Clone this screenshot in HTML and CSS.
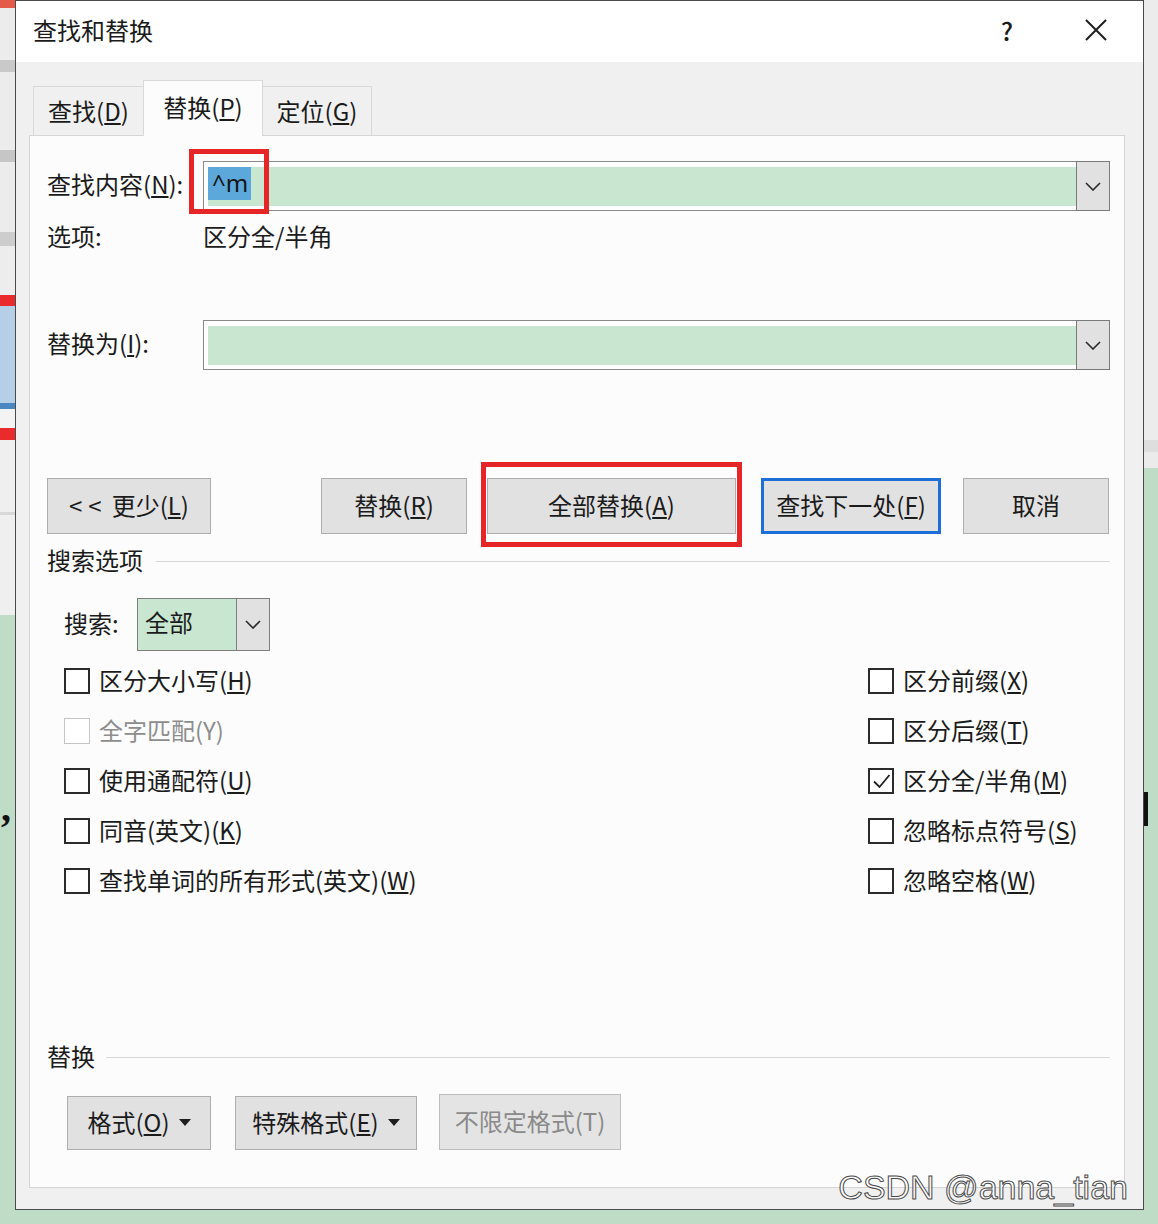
FILE: index.html
```html
<!DOCTYPE html>
<html lang="zh-CN">
<head>
<meta charset="utf-8">
<title>查找和替换</title>
<link rel="stylesheet" href="styles.css">
</head>
<body>
<div class="screen">
  <div class="strip strip-left"><span class="comma">,</span></div>

  <div class="dialog">
    <div class="titlebar">
      <span class="title">查找和替换</span>
      <span class="help">?</span>
      <span class="close">
        <svg width="22" height="22" viewBox="0 0 22 22"><path d="M1 1 L21 21 M21 1 L1 21" stroke="#1e1e1e" stroke-width="2" fill="none"/></svg>
      </span>
    </div>

    <div class="dialog-body">
      <div class="tabs">
        <div class="tab tab-find">查找(<u>D</u>)</div>
        <div class="tab tab-replace active">替换(<u>P</u>)</div>
        <div class="tab tab-goto">定位(<u>G</u>)</div>
      </div>

      <div class="panel">
        <div class="field-row">
          <span class="field-label">查找内容(<u>N</u>):</span>
          <div class="combo">
            <div class="combo-input"><div class="combo-fill"><span class="sel">^m</span></div></div>
            <div class="combo-btn"><svg width="16" height="9" viewBox="0 0 16 9"><path d="M1 1 L8 8 L15 1" stroke="#2a2a2a" stroke-width="1.6" fill="none"/></svg></div>
            <div class="annot annot-find"></div>
          </div>
        </div>

        <div class="opt-row">
          <span class="field-label">选项:</span>
          <span class="opt-value">区分全/半角</span>
        </div>

        <div class="field-row repl-row">
          <span class="field-label">替换为(<u>I</u>):</span>
          <div class="combo">
            <div class="combo-input"><div class="combo-fill"></div></div>
            <div class="combo-btn"><svg width="16" height="9" viewBox="0 0 16 9"><path d="M1 1 L8 8 L15 1" stroke="#2a2a2a" stroke-width="1.6" fill="none"/></svg></div>
          </div>
        </div>

        <div class="btn-row">
          <button class="btn btn-less"><span class="arrows">&lt;&lt;</span>更少(<u>L</u>)</button>
          <button class="btn btn-replace">替换(<u>R</u>)</button>
          <button class="btn btn-all">全部替换(<u>A</u>)<span class="annot annot-all"></span></button>
          <button class="btn btn-next">查找下一处(<u>F</u>)</button>
          <button class="btn btn-cancel">取消</button>
        </div>

        <div class="section-head">搜索选项</div>

        <div class="search-row">
          <span class="search-label">搜索:</span>
          <div class="select">
            <div class="select-value">全部</div>
            <div class="select-btn"><svg width="16" height="9" viewBox="0 0 16 9"><path d="M1 1 L8 8 L15 1" stroke="#2a2a2a" stroke-width="1.6" fill="none"/></svg></div>
          </div>
        </div>

        <div class="checks">
          <label class="check"><span class="box"></span>区分大小写(<u>H</u>)</label>
          <label class="check"><span class="box"></span>区分前缀(<u>X</u>)</label>
          <label class="check disabled"><span class="box"></span>全字匹配(Y)</label>
          <label class="check"><span class="box"></span>区分后缀(<u>T</u>)</label>
          <label class="check"><span class="box"></span>使用通配符(<u>U</u>)</label>
          <label class="check"><span class="box checked"><svg width="21" height="21" viewBox="0 0 21 21"><path d="M3 10.5 L8.5 16 L18.5 4" stroke="#1e1e1e" stroke-width="1.8" fill="none"/></svg></span>区分全/半角(<u>M</u>)</label>
          <label class="check"><span class="box"></span>同音(英文)(<u>K</u>)</label>
          <label class="check"><span class="box"></span>忽略标点符号(<u>S</u>)</label>
          <label class="check"><span class="box"></span>查找单词的所有形式(英文)(<u>W</u>)</label>
          <label class="check"><span class="box"></span>忽略空格(<u>W</u>)</label>
        </div>

        <div class="section-head section-replace">替换</div>

        <div class="fmt-row">
          <button class="btn fmt-btn fmt-format">格式(<u>O</u>)<svg class="tri" width="12" height="7" viewBox="0 0 12 7"><path d="M0 0 H12 L6 7 Z" fill="#1e1e1e"/></svg></button>
          <button class="btn fmt-btn fmt-special">特殊格式(<u>E</u>)<svg class="tri" width="12" height="7" viewBox="0 0 12 7"><path d="M0 0 H12 L6 7 Z" fill="#1e1e1e"/></svg></button>
          <button class="btn fmt-btn fmt-nolimit" disabled>不限定格式(T)</button>
        </div>
      </div>
    </div>
  </div>

  <div class="strip strip-right"><span class="mark"></span></div>

  <div class="watermark">CSDN @anna_tian</div>
</div>
</body>
</html>
```

FILE: styles.css
```css
* { box-sizing: border-box; }

html, body {
  margin: 0;
  padding: 0;
}

body {
  width: 1158px;
  height: 1224px;
  overflow: hidden;
  font-family: "Noto Sans CJK SC", "Microsoft YaHei", sans-serif;
  color: #1b1b1b;
  background: #bfdcc6;
}

.screen {
  position: relative;
  display: flex;
  align-items: flex-start;
  height: 1224px;
  background: linear-gradient(to bottom, #e9e9e9 0, #e9e9e9 615px, #bfdcc6 615px, #bfdcc6 100%);
}

/* backdrop strips (document behind the dialog) */
.strip {
  flex: none;
  height: 1224px;
}

.strip-left {
  width: 15px;
  padding-top: 788px;
  background: linear-gradient(to bottom,
    #e35a48 0, #e35a48 8px,
    #ececec 8px, #ececec 60px,
    #c9c9c9 60px, #c9c9c9 72px,
    #ececec 72px, #ececec 150px,
    #c6c6c6 150px, #c6c6c6 162px,
    #ececec 162px, #ececec 232px,
    #cdcdcd 232px, #cdcdcd 246px,
    #ededed 246px, #ededed 295px,
    #ea2b2b 295px, #ea2b2b 306px,
    #b5d0e6 306px, #b5d0e6 403px,
    #4a86bf 403px, #4a86bf 409px,
    #f3f3f3 409px, #f3f3f3 428px,
    #ea2b2b 428px, #ea2b2b 440px,
    #efefef 440px, #efefef 512px,
    #d8d8d8 512px, #d8d8d8 515px,
    #efefef 515px, #efefef 615px,
    #bfdcc6 615px, #bfdcc6 100%);
}

.comma {
  display: block;
  padding-left: 1px;
  font-family: "Liberation Serif", serif;
  font-weight: bold;
  font-size: 40px;
  line-height: 40px;
  color: #111;
}

.strip-right {
  width: 14px;
  padding-top: 792px;
  background: linear-gradient(to bottom,
    #ececec 0, #ececec 440px,
    #dedede 440px, #dedede 452px,
    #ebebeb 452px, #ebebeb 468px,
    #bfdcc6 468px, #bfdcc6 100%);
}

.mark {
  display: block;
  width: 4px;
  height: 34px;
  background: #111;
}

/* dialog */
.dialog {
  flex: none;
  width: 1129px;
  height: 1210px;
  border: 1px solid #4a4a4a;
  background: #f0f0f0;
  display: flex;
  flex-direction: column;
}

.titlebar {
  flex: none;
  height: 61px;
  background: #ffffff;
  display: flex;
  align-items: center;
  padding: 0 36px 3px 17px;
}

.title {
  font-size: 24px;
  line-height: 30px;
}

.help {
  margin-left: auto;
  font-size: 25px;
  line-height: 30px;
  font-weight: 500;
  color: #1a1a1a;
}

.close {
  margin-left: 72px;
  width: 22px;
  height: 22px;
  display: flex;
}

.dialog-body {
  flex: 1;
  display: flex;
  flex-direction: column;
  padding: 18px 18px 21px 13px;
}

/* tabs */
.tabs {
  flex: none;
  display: flex;
  align-items: flex-end;
  padding-left: 4px;
}

.tab {
  height: 49px;
  border: 1px solid #d9d9d9;
  border-bottom: none;
  background: #f0f0f0;
  font-size: 24px;
  display: flex;
  align-items: center;
  justify-content: center;
  padding-bottom: 2px;
}

.tab-find { width: 110px; border-right: none; }
.tab-replace { width: 120px; }
.tab-goto { width: 109px; border-left: none; }

.tab.active {
  height: 56px;
  margin-bottom: -1px;
  background: #fcfcfc;
  position: relative;
  z-index: 2;
  padding-bottom: 5px;
}

/* panel */
.panel {
  flex: 1;
  position: relative;
  z-index: 1;
  border: 1px solid #d5d5d5;
  background: #fcfcfc;
  display: flex;
  flex-direction: column;
  padding: 25px 14px 0 17px;
}

.field-row {
  display: flex;
  align-items: center;
  height: 50px;
}

.field-label {
  flex: none;
  width: 156px;
  font-size: 24px;
  line-height: 30px;
  padding-bottom: 4px;
}

.combo {
  flex: 1;
  height: 50px;
  display: flex;
  position: relative;
  border: 1px solid #8a8a8a;
  background: #ffffff;
}

.combo-input {
  flex: 1;
  padding: 5px 0 4px 4px;
  display: flex;
}

.combo-fill {
  flex: 1;
  background: #c9e7d0;
  display: flex;
  align-items: flex-start;
}

.sel {
  height: 33px;
  padding: 0 3px 0 4px;
  background: #5ca8da;
  color: #141414;
  font-family: "Noto Sans", "Noto Sans CJK SC", sans-serif;
  font-size: 24px;
  line-height: 32px;
}

.combo-btn {
  flex: none;
  width: 34px;
  margin: -1px -1px -1px 0;
  border: 1px solid #7a7a7a;
  background: #e1e1e1;
  display: flex;
  align-items: center;
  justify-content: center;
}

.annot {
  position: absolute;
  border: 5px solid #e62626;
  pointer-events: none;
}

.annot-find {
  left: -15px;
  top: -13px;
  width: 80px;
  height: 65px;
}

.opt-row {
  display: flex;
  align-items: center;
  height: 30px;
  margin-top: 12px;
}

.opt-value {
  font-size: 24px;
  line-height: 30px;
  padding-bottom: 4px;
}

.repl-row {
  margin-top: 67px;
}

/* buttons */
.btn {
  flex: none;
  height: 56px;
  border: 1px solid #adadad;
  background: #e1e1e1;
  font-family: "Noto Sans CJK SC", "Microsoft YaHei", sans-serif;
  font-size: 24px;
  color: #1b1b1b;
  display: flex;
  align-items: center;
  justify-content: center;
  padding: 0 0 4px 0;
  position: relative;
}

.btn-row {
  display: flex;
  margin-top: 108px;
}

.arrows {
  letter-spacing: 6px;
  margin-right: 4px;
}

.btn-less { width: 164px; }
.btn-replace { width: 146px; margin-left: 110px; }
.btn-all { width: 249px; margin-left: 20px; }
.btn-next { width: 180px; margin-left: 25px; border: 3px solid #1c6fd6; }
.btn-cancel { width: 146px; margin-left: 22px; }

.annot-all {
  left: -7px;
  top: -17px;
  width: 261px;
  height: 85px;
}

/* section headings */
.section-head {
  display: flex;
  align-items: center;
  height: 30px;
  margin-top: 13px;
  font-size: 24px;
  line-height: 30px;
  padding-bottom: 4px;
}

.section-head::after {
  content: "";
  flex: 1;
  height: 1px;
  margin-left: 13px;
  margin-top: 3px;
  background: #d6d6d6;
}

.section-replace {
  margin-top: 136px;
}

.section-replace::after {
  margin-left: 11px;
}

/* search select */
.search-row {
  display: flex;
  align-items: center;
  margin-top: 21px;
  padding-left: 17px;
}

.search-label {
  width: 73px;
  font-size: 24px;
  line-height: 30px;
  padding-bottom: 4px;
}

.select {
  display: flex;
  width: 133px;
  height: 53px;
  border: 1px solid #7f7f7f;
}

.select-value {
  flex: 1;
  background: #c9e7d0;
  font-size: 24px;
  line-height: 30px;
  padding: 8px 0 0 7px;
}

.select-btn {
  flex: none;
  width: 33px;
  border-left: 1px solid #7f7f7f;
  background: #e1e1e1;
  display: flex;
  align-items: center;
  justify-content: center;
}

/* checkboxes */
.checks {
  display: grid;
  grid-template-columns: 804px 1fr;
  grid-auto-rows: 50px;
  margin-top: 6px;
  padding-left: 17px;
}

.check {
  display: flex;
  align-items: center;
  font-size: 24px;
  line-height: 30px;
  color: #1b1b1b;
  padding-bottom: 4px;
}

.box {
  flex: none;
  width: 26px;
  height: 26px;
  margin: 2px 9px 0 0;
  border: 2px solid #2b2b2b;
  background: #ffffff;
  display: flex;
  align-items: center;
  justify-content: center;
}

.check.disabled {
  color: #8d8d8d;
}

.check.disabled .box {
  border: 1px solid #c4c4c4;
}

/* format buttons */
.fmt-row {
  display: flex;
  align-items: flex-end;
  margin-top: 21px;
  padding-left: 20px;
}

.fmt-btn {
  height: 54px;
}

.tri {
  margin-left: 9px;
  margin-top: 3px;
}

.fmt-format { width: 144px; }
.fmt-special { width: 182px; margin-left: 24px; }
.fmt-nolimit {
  width: 182px;
  height: 56px;
  margin-left: 22px;
  color: #8a8a8a;
  background: #e4e4e4;
  border-color: #bdbdbd;
}

/* watermark overlay */
.watermark {
  position: absolute;
  z-index: 10;
  right: 30px;
  top: 1170px;
  font-family: "Liberation Sans", Arial, sans-serif;
  font-size: 34px;
  line-height: 34px;
  color: rgba(255, 255, 255, 0.85);
  -webkit-text-stroke: 1px #4a4a4a;
  white-space: nowrap;
}
```
